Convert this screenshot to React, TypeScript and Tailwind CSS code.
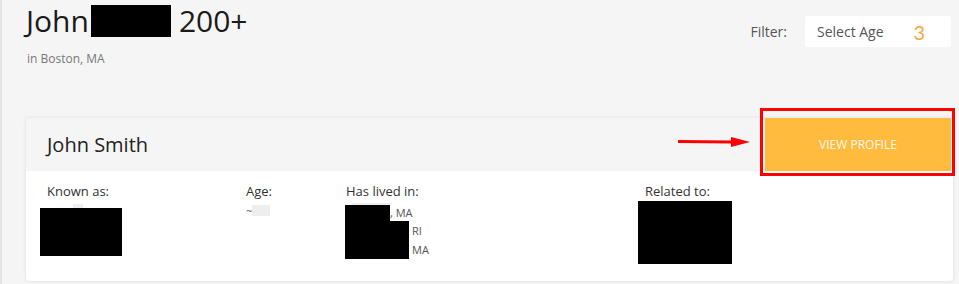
import React from 'react';

const Redacted = ({ className }: { className: string }) => <div className={`bg-black ${className}`} />;

const Field = ({ label, children, className }: { label: string; children?: React.ReactNode; className: string }) => (
  <div className={className}>
    <div className="text-[13px] leading-[18px] text-[#333]">{label}</div>
    {children}
  </div>
);

export default function App() {
  return (
    <div
      className="w-[959px] h-[284px] overflow-hidden bg-[#f5f5f5] border-l-2 border-[#e4e4e4] pl-[23px] pr-[6px] relative"
      style={{ fontFamily: '"Open Sans", "Liberation Sans", sans-serif' }}
    >
      {/* top row */}
      <div className="flex justify-between">
        <div>
          <h1 className="flex items-center text-[30px] leading-[42px] text-[#1a1a1a] pl-[1px]">
            <span>John</span>
            <span className="inline-block w-[80px] h-[32px] bg-black ml-[2px] mr-[8px]" />
            <span>200+</span>
          </h1>
          <p className="text-[12px] leading-[16px] text-[#777] mt-[9px] pl-[2px]">in Boston, MA</p>
        </div>
        <div className="flex items-center gap-[18px] pt-[16px] self-start">
          <span className="text-[14px] text-[#555]">Filter:</span>
          <div className="w-[146px] h-[31px] bg-white rounded-[3px] flex items-center pl-[12px] mr-[2px]">
            <span className="text-[14px] text-[#555]">Select Age</span>
            <span className="ml-[30px] text-[20px] text-[#f7a83a] leading-none" style={{ fontFamily: 'Lato, sans-serif' }}>3</span>
          </div>
        </div>
      </div>

      {/* card */}
      <div className="mt-[50px] w-[929px] h-[165px] bg-white border border-[#ebebeb] rounded-[4px] shadow-[0_0_3px_rgba(0,0,0,0.06)] overflow-hidden">
        <div className="h-[53px] bg-[#f5f5f5] flex items-center justify-between">
          <h2 className="text-[20px] text-[#222] pl-[21px]">John Smith</h2>
          <button className="w-[186px] h-[53px] bg-[#ffbb3d] text-[12px] text-[#fff8ea] mr-[2px]">VIEW PROFILE</button>
        </div>
        <div className="flex pl-[21px] pt-[11px]">
          <Field label="Known as:" className="w-[199px]">
            <div className="w-[10px] h-[4px] bg-[#eeeeee] ml-[26px] mt-[4px]" />
            <Redacted className="w-[82px] h-[48px] -ml-[7px]" />
          </Field>
          <Field label="Age:" className="w-[100px]">
            <div className="flex items-end text-[11px] text-[#555] mt-[5px]">
              <span className="leading-[10px]">~</span>
              <div className="w-[18px] h-[11px] bg-[#eeeeee]" />
            </div>
          </Field>
          <Field label="Has lived in:" className="w-[299px]">
            <div className="w-[40px] h-[2px] bg-[#eeeeee] ml-[6px] mt-[3px]" />
            <div className="text-[11px] text-[#555] leading-[19px] -ml-[1px]">
              <div className="flex items-end h-[16px]">
                <Redacted className="w-[45px] h-[16px]" />
                <span className="leading-[16px]">, MA</span>
              </div>
              <div className="flex">
                <Redacted className="w-[64px] h-[38px]" />
                <div className="pl-[3px]">
                  <div>RI</div>
                  <div>MA</div>
                </div>
              </div>
            </div>
          </Field>
          <Field label="Related to:" className="flex-1">
            <Redacted className="w-[94px] h-[63px] -ml-[7px] mt-[1px]" />
          </Field>
        </div>
      </div>

      {/* annotation: arrow and highlight box */}
      <svg className="absolute left-[676px] top-[134px]" width="74" height="16" viewBox="0 0 74 16">
        <path d="M1 7.5 L54 8" stroke="#ff0000" strokeWidth="3" strokeLinecap="round" />
        <path d="M53 3 L72 8 L53 13 Z" fill="#ff0000" />
      </svg>
      <div className="absolute left-[758px] top-[108px] w-[195px] h-[68px] border-[3px] border-[#ff0000] pointer-events-none" />
    </div>
  );
}
